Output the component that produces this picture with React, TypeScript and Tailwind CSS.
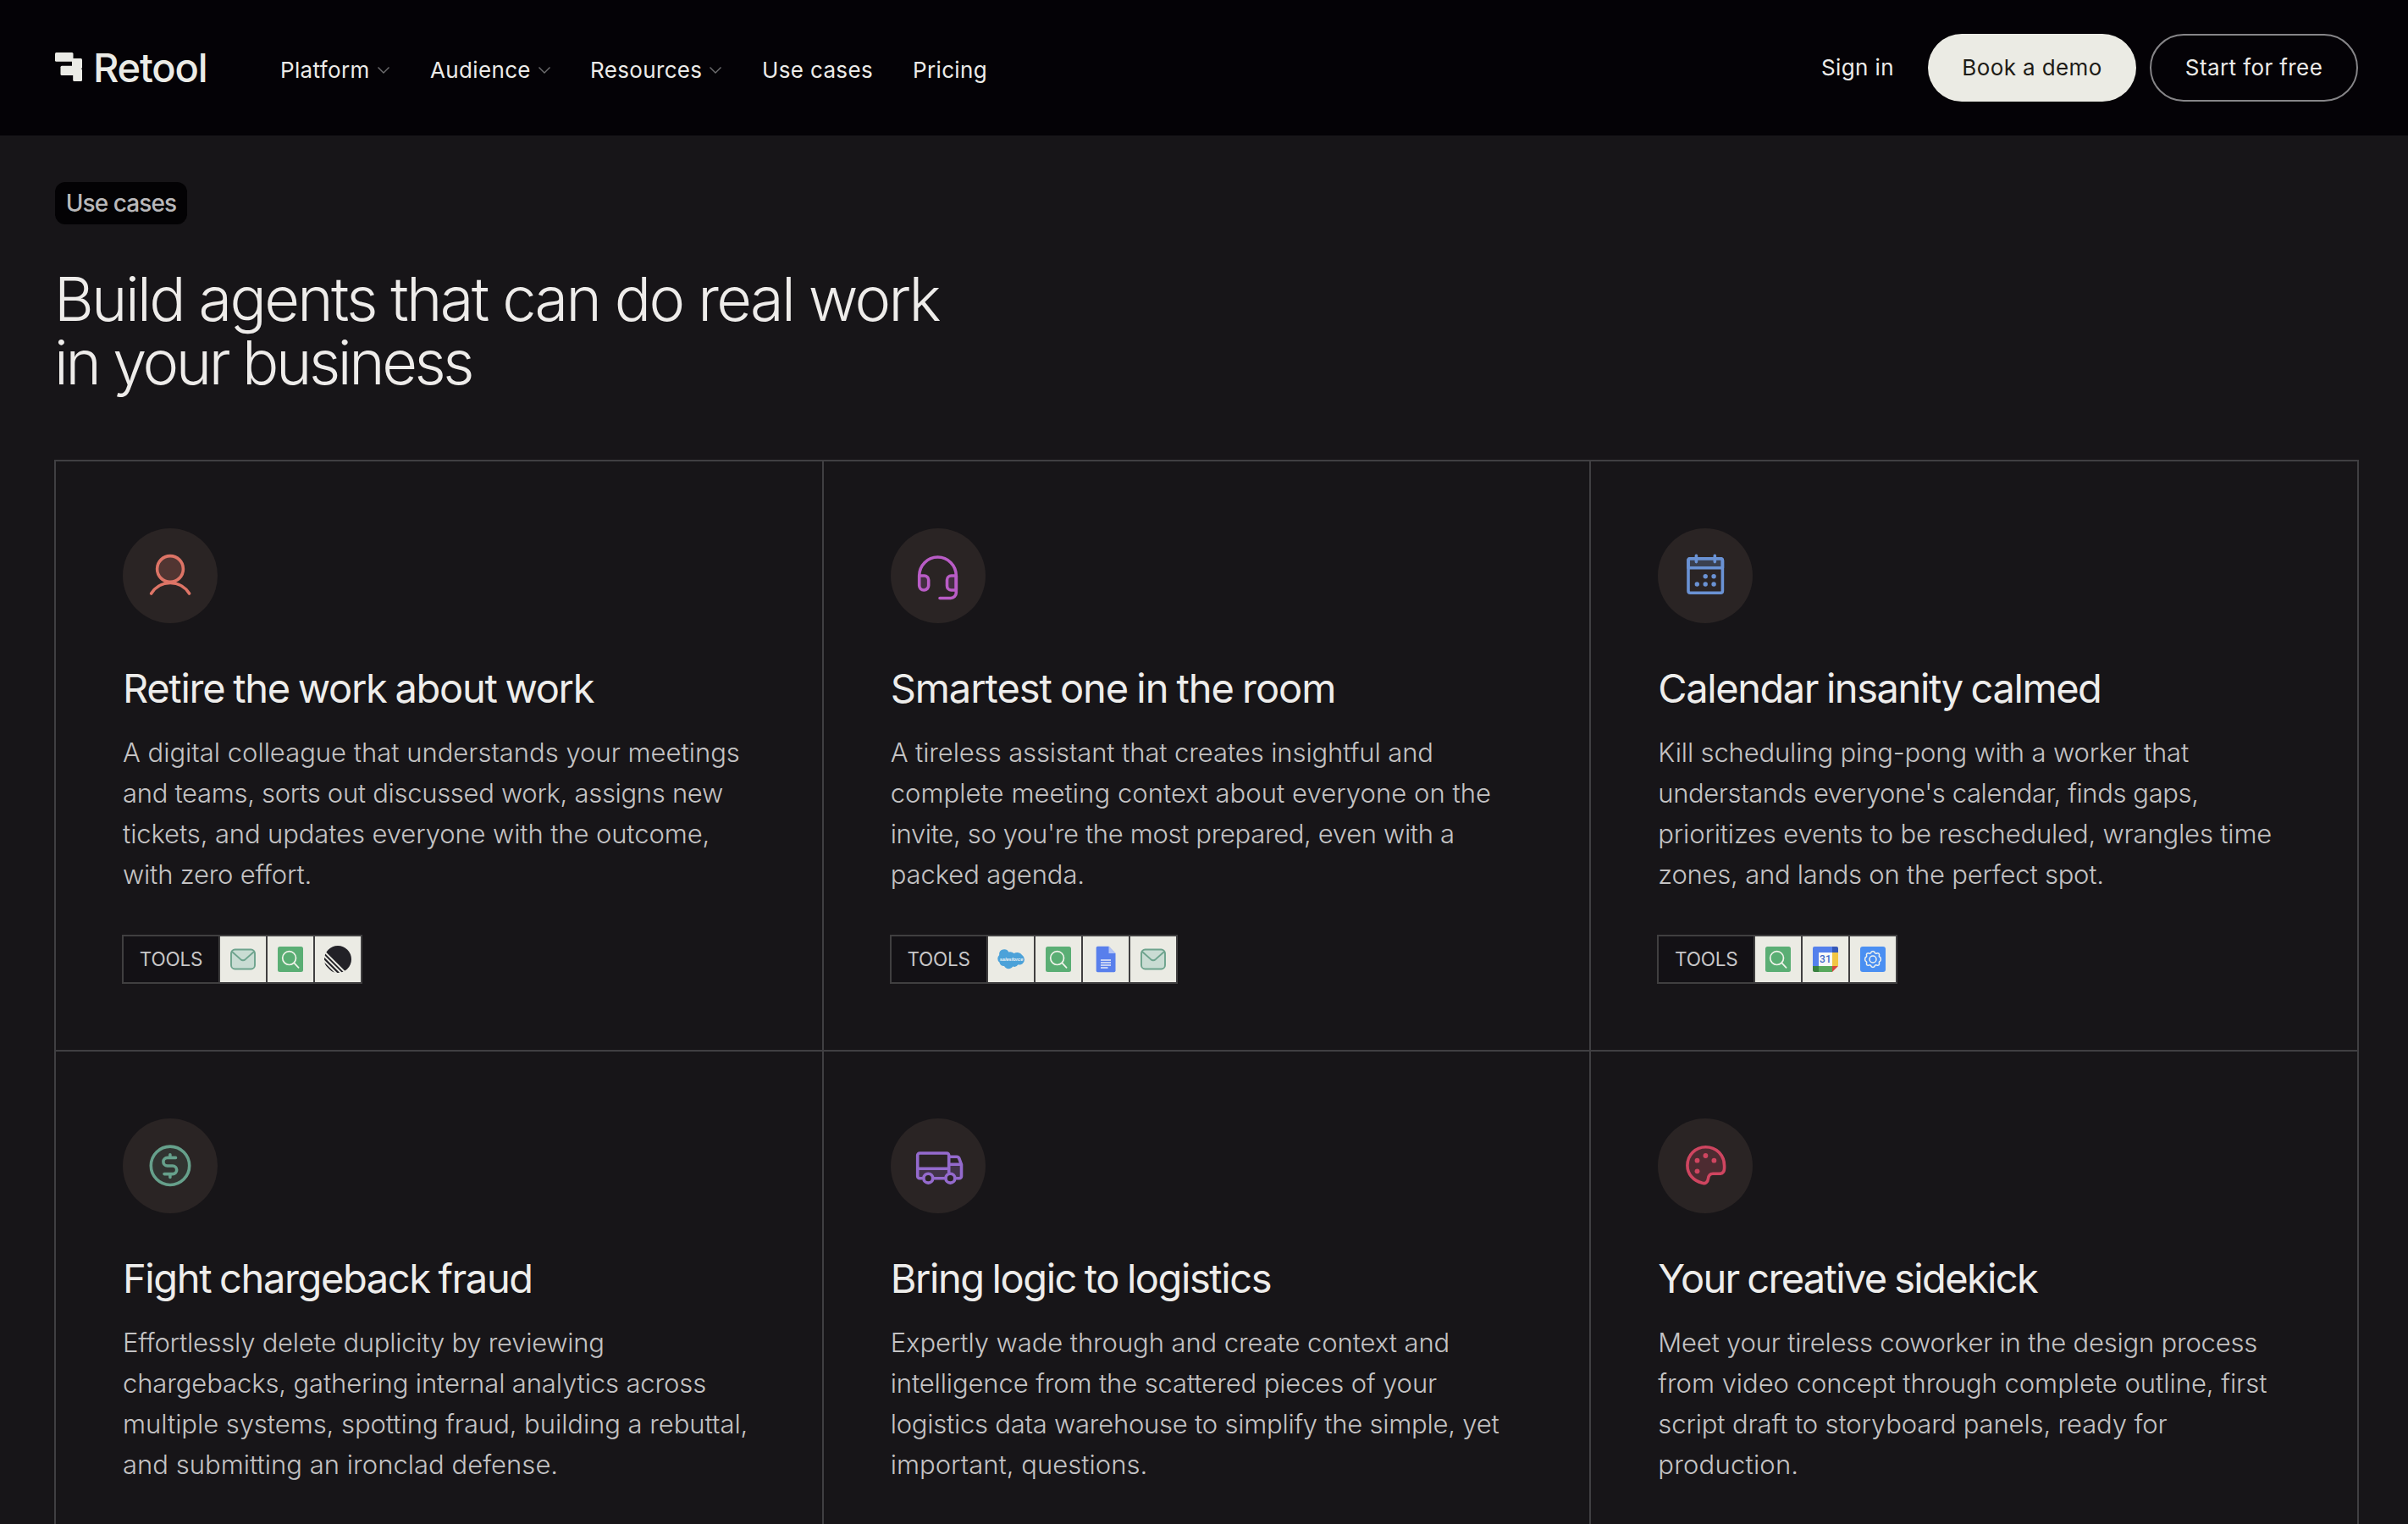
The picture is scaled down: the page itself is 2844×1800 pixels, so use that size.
import React from 'react';
import { clsx } from 'clsx';

type ToolName = 'mail' | 'search' | 'linear' | 'salesforce' | 'docs' | 'calendar' | 'settings';

interface UseCase {
  title: string;
  titleClass: string;
  lines: [text: string, className: string][];
  icon: React.ReactNode;
  tools: ToolName[];
}

const RetoolMark = () => (
  <svg className="h-[34px] w-8 shrink-0" viewBox="0 0 32 34" fill="#ebebe6" aria-hidden="true">
    <rect x="0" y="0" width="21.5" height="10.7" rx="1.5" />
    <rect x="20" y="7" width="12" height="12" rx="1.5" />
    <rect x="6.5" y="15.8" width="16" height="11.2" rx="1.5" />
    <rect x="21.2" y="19" width="10.8" height="15" rx="1.5" />
    <path d="M20 7H22V17H20ZM20.5 17H25V26H20.5Z" />
  </svg>
);

const Chevron = () => (
  <svg className="h-2 w-[14px]" viewBox="0 0 14 8" fill="none" stroke="#6f6e70" strokeWidth="1.4" aria-hidden="true">
    <path d="M0.5 0.5L7 7L13.5 0.5" />
  </svg>
);

// Round badge that holds a 112x112 line drawing
const Badge: React.FC<{ color: string; children: React.ReactNode }> = ({ color, children }) => (
  <svg
    className="size-28 rounded-full bg-[#2a2424]"
    viewBox="0 0 112 112"
    fill="none"
    stroke={color}
    strokeWidth="3.6"
    strokeLinecap="round"
    strokeLinejoin="round"
    aria-hidden="true"
  >
    {children}
  </svg>
);

const PersonIcon = () => (
  <Badge color="#dd7466">
    <circle cx="56" cy="48" r="15.4" fill="#dd7466" fillOpacity="0.22" />
    <path d="M33.6 77A26.5 26.5 0 0 1 78.6 77" />
  </Badge>
);

const HeadsetIcon = () => (
  <Badge color="#b95cc6">
    <path d="M33.7 56A21.8 22 0 0 1 77.3 56V76a6.5 6.5 0 0 1-6.5 6.5H58" />
    <path d="M33.7 56H39.7a5 5 0 0 1 5 5V67.5a5.5 5.5 0 0 1-11 0Z" fill="#b95cc6" fillOpacity="0.18" />
    <path d="M77.3 56H71.5a5 5 0 0 0-5 5V68a5 5 0 0 0 5 5H77.3Z" fill="#b95cc6" fillOpacity="0.18" />
  </Badge>
);

const CalendarIcon = () => (
  <Badge color="#6a92d4">
    <path d="M36 38a2.2 2.2 0 0 1 2.2-2.2H74.2a2.2 2.2 0 0 1 2.2 2.2V46.8H36Z" fill="#6a92d4" fillOpacity="0.25" />
    <rect x="36" y="35.8" width="40.4" height="40.4" rx="2.2" />
    <path d="M45.4 32.3V39.6M67.3 32.3V39.6" />
    <g fill="#6a92d4" stroke="none">
      <circle cx="56.2" cy="56.8" r="2.7" />
      <circle cx="66.1" cy="56.8" r="2.7" />
      <circle cx="46.3" cy="66" r="2.7" />
      <circle cx="56.2" cy="66" r="2.7" />
      <circle cx="66.1" cy="66" r="2.7" />
    </g>
  </Badge>
);

const DollarIcon = () => (
  <Badge color="#66a08b">
    <circle cx="56" cy="55.8" r="22.7" fill="#66a08b" fillOpacity="0.13" />
    <path d="M62.5 46.4H52.7a4.8 4.8 0 0 0 0 9.6H58.9a4.8 4.8 0 0 1 0 9.6H49M55.9 42.8V46.4M55.9 65.6V69.4" />
  </Badge>
);

const TruckIcon = () => (
  <Badge color="#946acd">
    <path d="M31.7 59.3H68.7V54.3H83.5V68a3 3 0 0 1-3 3H34.7a3 3 0 0 1-3-3Z" fill="#946acd" fillOpacity="0.22" stroke="none" />
    <path d="M37 70.7H34.2a2.5 2.5 0 0 1-2.5-2.5V43.5a2.5 2.5 0 0 1 2.5-2.5H66.2a2.5 2.5 0 0 1 2.5 2.5V63.5M31.7 59.3H68.7M51 70.7H63.5M77.5 70.7H81a2.5 2.5 0 0 0 2.5-2.5V54.3H68.7M68.7 45.3H78a3 3 0 0 1 2.9 2.2L83.5 54.3" />
    <circle cx="44.3" cy="70.7" r="5.4" fill="#2a2424" />
    <circle cx="70.4" cy="70.7" r="5.4" fill="#2a2424" />
  </Badge>
);

const PaletteIcon = () => (
  <Badge color="#cf4560">
    <path
      d="M56.5 33.7C69 33.7 78.6 43 78.6 56V58.5C78.6 63 76.2 65.3 72.5 65.3H65C61 65.3 60 68 59.5 71C58.9 75.6 56 77.3 52.5 76.3C42 73.5 34.9 66 34.9 55.5C34.9 43 44.5 33.7 56.5 33.7Z"
      fill="#cf4560"
      fillOpacity="0.22"
    />
    <g fill="#cf4560" stroke="none">
      <circle cx="46.5" cy="49.7" r="2.9" />
      <circle cx="56.4" cy="44" r="2.9" />
      <circle cx="66.4" cy="49.7" r="2.9" />
      <circle cx="46.5" cy="62.3" r="2.9" />
    </g>
  </Badge>
);

const toolIcons: Record<ToolName, React.ReactNode> = {
  mail: (
    <g fill="none" stroke="#6da38d" strokeWidth="1.9" strokeLinejoin="round">
      <rect x="2" y="4.5" width="28" height="23" rx="4.5" fill="#c9dcd3" />
      <path d="M3 7L13 15.9Q16 18.4 19 15.9L29 7" />
    </g>
  ),
  search: (
    <g fill="none" stroke="#f0f3ea" strokeWidth="1.7" strokeLinecap="round">
      <rect x="1" y="1" width="30" height="30" rx="2.5" fill="#5aae74" stroke="none" />
      <circle cx="14.6" cy="14.6" r="7.9" />
      <path d="M20.4 20.4L25.6 25.8" />
    </g>
  ),
  linear: (
    <g>
      <circle cx="16" cy="16" r="16" fill="#222127" />
      <path d="M-1 5.8L26.2 33M-1.5 10.8L21.2 33.5M-2 16.2L16 34.2" stroke="#ebebe4" strokeWidth="2" fill="none" />
      <path d="M-1 22L10 33" stroke="#ebebe4" strokeWidth="1.8" fill="none" />
    </g>
  ),
  salesforce: (
    <g>
      <path
        d="M13.3 7.5a6.7 6.7 0 0 1 6.3 1.6a7 7 0 0 1 4.5-1a7 7 0 0 1 5.3 3.2a6 6 0 0 1 2.6 5a6.2 6.2 0 0 1-7.6 6a5.2 5.2 0 0 1-6.2 2.3a6 6 0 0 1-10.2-.6a4.9 4.9 0 0 1-5.5-4.3a5.6 5.6 0 0 1-.3-8.7a5.9 5.9 0 0 1 11.1-3.5Z"
        fill="#4ca2d9"
      />
      <text x="16.5" y="18" fontSize="5.6" textAnchor="middle" fill="#eef4f5" className="font-['Liberation_Sans'] font-bold italic">
        salesforce
      </text>
    </g>
  ),
  docs: (
    <g>
      <path d="M6.5 .7H19.5L27.5 9V29.5Q27.5 31.3 25.7 31.3H6.5Q4.7 31.3 4.7 29.5V2.5Q4.7 .7 6.5 .7Z" fill="#587fec" />
      <path d="M19.5 .7L27.5 9H19.5Z" fill="#b3c5f6" />
      <path d="M10 17H22M10 20H22M10 23H22M10 26H18.5" stroke="#e9edf6" strokeWidth="1.5" />
    </g>
  ),
  calendar: (
    <g>
      <path d="M3 1H24V8H8V24H1V3Q1 1 3 1Z" fill="#5480ec" />
      <path d="M24 1H29Q31 1 31 3V8H24Z" fill="#3558b8" />
      <path d="M24 8H31V24H24Z" fill="#f2c644" />
      <path d="M8 24H24V31H8Z" fill="#57a85c" />
      <path d="M1 24H8V31H3Q1 31 1 29Z" fill="#39803f" />
      <path d="M24 24H31L24 31Z" fill="#d8483b" />
      <path d="M8 8H24V24H8Z" fill="#f7f8f8" />
      <text x="15.9" y="20.4" fontSize="12" textAnchor="middle" fill="#3c68c8" className="font-[Roboto] font-medium">
        31
      </text>
    </g>
  ),
  settings: (
    <g fill="none" stroke="#f1f3ee" strokeWidth="1.5" strokeLinejoin="round">
      <rect x="1" y="1" width="30" height="30" rx="3" fill="#4a8ff2" stroke="none" />
      <circle cx="16" cy="16" r="4" />
      <path d="M16 6.6Q18 6.6 18.6 8.7Q19.5 9.6 20.6 9Q23 8.4 23.6 10.3Q23.2 12 23.4 12.7Q25.5 13.6 25.4 16Q25.5 18.4 23.4 19.3Q23.2 20 23.6 21.7Q23 23.6 20.6 23Q19.5 22.4 18.6 23.3Q18 25.4 16 25.4Q14 25.4 13.4 23.3Q12.5 22.4 11.4 23Q9 23.6 8.4 21.7Q8.8 20 8.6 19.3Q6.5 18.4 6.6 16Q6.5 13.6 8.6 12.7Q8.8 12 8.4 10.3Q9 8.4 11.4 9Q12.5 9.6 13.4 8.7Q14 6.6 16 6.6Z" />
    </g>
  ),
};

const useCases: UseCase[] = [
  {
    title: 'Retire the work about work',
    titleClass: 'tracking-[-1.3px]',
    lines: [
      ['A digital colleague that understands your meetings', 'tracking-[-0.01px]'],
      ['and teams, sorts out discussed work, assigns new', 'tracking-[-0.31px]'],
      ['tickets, and updates everyone with the outcome,', 'tracking-[-0.11px]'],
      ['with zero effort.', 'tracking-[-0.2px]'],
    ],
    icon: <PersonIcon />,
    tools: ['mail', 'search', 'linear'],
  },
  {
    title: 'Smartest one in the room',
    titleClass: 'tracking-[-1.06px]',
    lines: [
      ['A tireless assistant that creates insightful and', 'tracking-[-0.1px]'],
      ['complete meeting context about everyone on the', 'tracking-[0.05px]'],
      ["invite, so you're the most prepared, even with a", 'tracking-[-0.35px]'],
      ['packed agenda.', 'tracking-[-0.1px]'],
    ],
    icon: <HeadsetIcon />,
    tools: ['salesforce', 'search', 'docs', 'mail'],
  },
  {
    title: 'Calendar insanity calmed',
    titleClass: 'tracking-[-1.42px]',
    lines: [
      ['Kill scheduling ping-pong with a worker that', 'tracking-[-0.15px]'],
      ["understands everyone's calendar, finds gaps,", 'tracking-[-0.4px]'],
      ['prioritizes events to be rescheduled, wrangles time', 'tracking-[-0.17px]'],
      ['zones, and lands on the perfect spot.', 'tracking-[-0.23px]'],
    ],
    icon: <CalendarIcon />,
    tools: ['search', 'calendar', 'settings'],
  },
  {
    title: 'Fight chargeback fraud',
    titleClass: 'tracking-[-1.38px]',
    lines: [
      ['Effortlessly delete duplicity by reviewing', 'tracking-[-0.25px]'],
      ['chargebacks, gathering internal analytics across', 'tracking-[-0.12px]'],
      ['multiple systems, spotting fraud, building a rebuttal,', 'tracking-[-0.05px]'],
      ['and submitting an ironclad defense.', 'tracking-[0.02px]'],
    ],
    icon: <DollarIcon />,
    tools: [],
  },
  {
    title: 'Bring logic to logistics',
    titleClass: 'tracking-[-1.42px]',
    lines: [
      ['Expertly wade through and create context and', 'tracking-[-0.09px]'],
      ['intelligence from the scattered pieces of your', 'tracking-[-0.12px]'],
      ['logistics data warehouse to simplify the simple, yet', 'tracking-[-0.24px]'],
      ['important, questions.', 'tracking-[0.02px]'],
    ],
    icon: <TruckIcon />,
    tools: [],
  },
  {
    title: 'Your creative sidekick',
    titleClass: 'tracking-[-1.66px]',
    lines: [
      ['Meet your tireless coworker in the design process', 'tracking-[-0.21px]'],
      ['from video concept through complete outline, first', 'tracking-[-0.03px]'],
      ['script draft to storyboard panels, ready for', 'tracking-[-0.14px]'],
      ['production.', 'tracking-[0.2px]'],
    ],
    icon: <PaletteIcon />,
    tools: [],
  },
];

const navItems = [
  { label: 'Platform', hasMenu: true, className: 'w-[178px] pl-px' },
  { label: 'Audience', hasMenu: true, className: 'w-[189px]' },
  { label: 'Resources', hasMenu: true, className: 'w-[203px]' },
  { label: 'Use cases', hasMenu: false, className: 'w-[178px]' },
  { label: 'Pricing', hasMenu: false, className: '' },
];

const Header = () => (
  <header className="flex h-40 items-center bg-[#040206] pl-[65px] pr-[59px] text-[#ecebe9]">
    <a href="#" className="flex w-[265px] items-center gap-[13px] pb-0.5">
      <RetoolMark />
      <span className="text-[47px] font-medium leading-none tracking-[-1.2px] text-[#ebebe6]">Retool</span>
    </a>
    <nav className="flex pt-1.5 text-[26px] leading-8 tracking-[0.35px]">
      {navItems.map((item) => (
        <a key={item.label} href="#" className={clsx('flex items-center gap-[9px]', item.className)}>
          {item.label}
          {item.hasMenu && <Chevron />}
        </a>
      ))}
    </nav>
    <div className="ml-auto flex items-center gap-4 text-[26px] leading-8 tracking-[0.4px]">
      <a href="#" className="mr-6 whitespace-nowrap">Sign in</a>
      <a href="#" className="flex h-20 w-[246px] items-center justify-center rounded-full bg-[#ebebe4] text-[#1d1b17]">
        Book a demo
      </a>
      <a href="#" className="flex h-20 w-[246px] items-center justify-center rounded-full border-2 border-[#868588]">
        Start for free
      </a>
    </div>
  </header>
);

const UseCaseCard: React.FC<{ item: UseCase }> = ({ item }) => (
  <article className="flex flex-col items-start border-b-2 border-r-2 border-[#403f42] pl-[79px] pt-[79px]">
    {item.icon}
    <h3 className={clsx('mt-[49px] whitespace-nowrap text-[47px] font-normal leading-14 text-[#eeedeb] [word-spacing:-2px]', item.titleClass)}>
      {item.title}
    </h3>
    <p className="mt-6 whitespace-nowrap text-[31px] font-light leading-12 text-[#c4c3c4]">
      {item.lines.map(([text, className]) => (
        <span key={text} className={clsx('block', className)}>{text}</span>
      ))}
    </p>
    {item.tools.length > 0 && (
      <div className="-ml-px mt-[47px] flex h-[58px] border-2 border-[#403f40] bg-[#403f40]">
        <div className="flex w-28 items-center justify-center bg-[#131115] text-[22.5px] tracking-[-0.2px] text-[#c8c7c8]">
          TOOLS
        </div>
        {item.tools.map((tool) => (
          <div key={tool} className="ml-0.5 flex w-[54px] items-center justify-center bg-[#ebebe4]">
            <svg className="size-8" viewBox="0 0 32 32" aria-hidden="true">{toolIcons[tool]}</svg>
          </div>
        ))}
      </div>
    )}
  </article>
);

export default function App() {
  return (
    <div className="h-[1800px] w-[2844px] overflow-hidden bg-[#171518] font-[Inter,'Liberation_Sans',sans-serif]">
      <Header />
      <main className="pl-16 pr-[58px] pt-[55px]">
        <span className="ml-px flex h-[50px] w-[156px] items-center justify-center rounded-xl bg-[#030204] text-[28px] font-medium tracking-[-0.9px] text-[#b9b8ba]">
          Use cases
        </span>
        <h1 className="mt-[50px] h-[228px] text-[72px] font-light leading-[75px] text-[#eeecea]">
          <span className="block tracking-[-2.64px]">Build agents that can do real work</span>
          <span className="block tracking-[-3.4px]">in your business</span>
        </h1>
        <section className="grid auto-rows-[697px] grid-cols-3 border-l-2 border-t-2 border-[#403f42]">
          {useCases.map((item) => (
            <UseCaseCard key={item.title} item={item} />
          ))}
        </section>
      </main>
    </div>
  );
}
